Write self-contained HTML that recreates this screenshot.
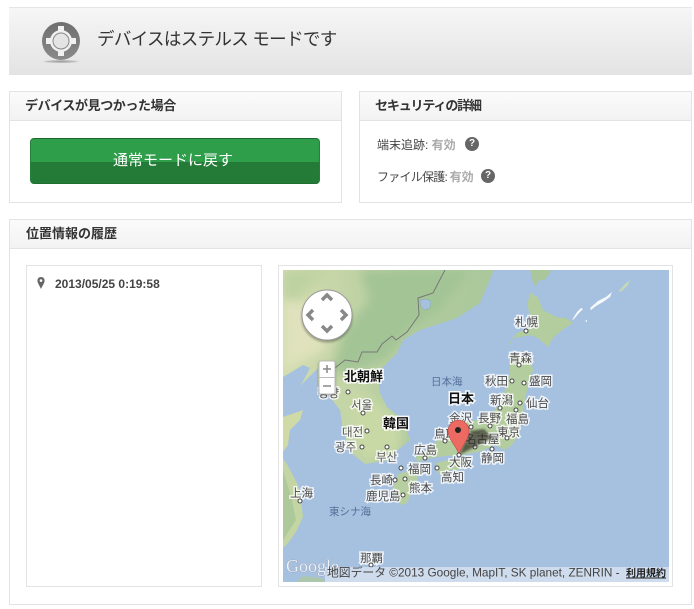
<!DOCTYPE html>
<html lang="ja"><head><meta charset="utf-8"><style>
*{box-sizing:border-box}
html,body{margin:0;padding:0;background:#fff;width:694px;height:609px;overflow:hidden}
body{position:relative;font-family:"Liberation Sans","Noto Sans CJK JP",sans-serif;color:#333}
.a{position:absolute}
.box{position:absolute;border:1px solid #e3e3e3;background:#fff}
.hd{position:absolute;left:0;right:0;top:0;height:29px;background:linear-gradient(#fbfbfb,#f2f2f2);border-bottom:1px solid #e3e3e3}
.t{position:absolute;white-space:nowrap;line-height:1}
.h{font-size:13px;font-weight:700;color:#333}
.q{position:absolute;width:14px;height:14px;border-radius:50%;background:#666;color:#fff;font:bold 10px/14px "Liberation Sans",sans-serif;text-align:center}
svg text{font-family:"Liberation Sans","Noto Sans CJK JP",sans-serif;paint-order:stroke;stroke:#fff;stroke-opacity:.8;stroke-width:3px;fill:#4a4a4a;font-size:11.5px}
svg text.b{font-weight:700;font-size:13px;fill:#111;stroke-width:3px;stroke-opacity:.9}
svg text.k{font-family:"Noto Sans CJK KR",sans-serif;fill:#555}
svg text.s{fill:#55709a;stroke:none}
svg circle.c{fill:#fff;stroke:#444;stroke-width:1}
</style></head><body>

<div class="a" style="left:9px;top:7px;width:683px;height:68px;background:linear-gradient(#f6f6f6,#e3e3e3);border-top:1px solid #e6e6e6"></div>
<svg class="a" style="left:36px;top:16px" width="50" height="50" viewBox="0 0 50 50">
<defs><radialGradient id="g" cx=".5" cy=".5" r=".5"><stop offset="0" stop-color="#999"/><stop offset=".7" stop-color="#aaa" stop-opacity=".7"/><stop offset="1" stop-color="#999" stop-opacity="0"/></radialGradient>
<linearGradient id="gr" x1="0" y1="0" x2="0" y2="1"><stop offset="0" stop-color="#6e6e6e"/><stop offset=".5" stop-color="#7c7c7c"/><stop offset="1" stop-color="#8a8a8a"/></linearGradient></defs>
<ellipse cx="25" cy="45.500" rx="19" ry="1.600" fill="url(#g)"/>
<circle cx="25" cy="25" r="19" fill="url(#gr)"/>
<circle cx="25" cy="25" r="11" fill="#f0f0f0"/>
<rect x="22" y="10" width="6" height="6" fill="#f0f0f0"/><rect x="22" y="34" width="6" height="6" fill="#f0f0f0"/><rect x="10" y="22" width="6" height="6" fill="#f0f0f0"/><rect x="34" y="22" width="6" height="6" fill="#f0f0f0"/>
<circle cx="25" cy="25" r="8" fill="#e4e4e4" stroke="#888" stroke-width="1"/>
</svg>
<div class="t" style="left:97px;top:31px;font-size:17.500px;letter-spacing:-.65px;color:#333">デバイスはステルス モードです</div>

<div class="box" style="left:9px;top:91px;width:333px;height:112px"><div class="hd"></div></div>
<div class="t h" style="left:25px;top:99px;letter-spacing:-.4px">デバイスが見つかった場合</div>
<div class="a" style="left:30px;top:138px;width:290px;height:46px;border-radius:4px;background:linear-gradient(#2f9e4a 0,#2f9e4a 52%,#247a37 52%,#247a37 100%);border:1px solid #1f6f33;border-color:#1c6a30 #25803a #1f6f33"></div>
<div class="t" style="left:113px;top:153px;font-size:15px;color:#fff">通常モードに戻す</div>

<div class="box" style="left:359px;top:91px;width:333px;height:112px"><div class="hd"></div></div>
<div class="t h" style="left:375px;top:99px;letter-spacing:-1.150px">セキュリティの詳細</div>
<div class="t" style="left:377px;top:139px;font-size:12px;color:#444">端末追跡: <span style="color:#aaa;font-weight:700">有効</span></div>
<div class="q" style="left:465px;top:137px">?</div>
<div class="t" style="left:377px;top:171px;font-size:12px;letter-spacing:-.75px;color:#444">ファイル保護: <span style="color:#aaa;font-weight:700;letter-spacing:0">有効</span></div>
<div class="q" style="left:481px;top:169px">?</div>

<div class="box" style="left:9px;top:219px;width:683px;height:386px"><div class="hd"></div></div>
<div class="t h" style="left:26px;top:227px">位置情報の履歴</div>

<div class="box" style="left:26px;top:265px;width:236px;height:322px"></div>
<svg class="a" style="left:36px;top:276px" width="10" height="14" viewBox="0 0 10 14"><path d="M5 1C2.800 1 1.400 2.600 1.400 4.600 1.400 7 3.800 10 5 13 6.200 10 8.600 7 8.600 4.600 8.600 2.600 7.200 1 5 1z" fill="#666"/><circle cx="5" cy="4.600" r="1.300" fill="#fff"/></svg>
<div class="t" style="left:55px;top:278px;font-size:12px;font-weight:700;color:#444">2013/05/25 0:19:58</div>

<div class="box" style="left:278px;top:265px;width:395px;height:322px"></div>
<svg class="a" style="left:283px;top:270px" width="386" height="312" viewBox="283 270 386 312">
<defs>
<linearGradient id="land" x1="0" y1="0" x2="1" y2="0"><stop offset="0" stop-color="#d3dcae"/><stop offset=".6" stop-color="#b2cc9e"/><stop offset="1" stop-color="#aac89c"/></linearGradient>
<filter id="bl"><feGaussianBlur stdDeviation="5"/></filter>
<filter id="sh"><feGaussianBlur stdDeviation="1.200"/></filter>
<clipPath id="cp"><path d="M283 270H494L480 303 457 318 420 330 403 340 397 353 377 373 380 393 387 407 403 420 410 440 395 452 390 460 365 464 350 452 343 430 340 410 327 393 318 385 318 368 303 383 300 387 310 368 303 365 290 373 283 377Z"/></clipPath>
</defs>
<rect x="283" y="270" width="386" height="312" fill="#a6c0df"/>
<path d="M283 270H494L480 303 457 318 420 330 403 340 397 353 377 373 380 393 387 407 403 420 410 440 395 452 390 460 365 464 350 452 343 430 340 410 327 393 318 385 318 368 303 383 300 387 310 368 303 365 290 373 283 377Z" fill="url(#land)"/>
<g clip-path="url(#cp)" filter="url(#bl)">
<path d="M360 270H470L440 310 410 330 385 360 360 370 330 375 345 330 370 300Z" fill="#a3c495"/>
<path d="M283 270H330L310 285 283 320Z" fill="#bdd2a0"/>
<path d="M283 300L330 305 325 350 283 370Z" fill="#dfe2bc"/>
<path d="M350 385L400 420 400 450 365 460 350 430Z" fill="#c9d9a6"/>
</g>
<path d="M445 270L433 293 418 298 419 315 407 332 396 340 392 336 382 344 377 352 362 352 358 362 345 360 335 368" fill="none" stroke="#777" stroke-width="1"/>
<path d="M420 300l6-1 5 2 -1 7-5 2-4-3z" fill="#a6c0df" stroke="#8aa" stroke-width=".5"/>
<!-- china -->
<path d="M283 417L303 410 300 420 290 430 288 445 283 452Z" fill="#cfdaa6"/>
<path d="M283 458L288 466 298 485 301 500 303 517 296 532 288 543 283 548Z" fill="#c3d5a2"/>
<path d="M283 470L292 500 296 520 283 540Z" fill="#adc99a"/>
<path d="M296 582L303 576 322 578 326 582Z" fill="#b0c998" opacity=".7"/>
<!-- Sakhalin, Hokkaido -->
<path d="M530 270H551L546 279 538 281 536 287 533 282Z" fill="#a9c79a"/>
<path d="M530 293L538 297 543 310 556 317 566 318 573 323 562 330 553 338 548 347 538 338 530 335 520 337 513 338 510 345 508 350 511 340 518 332 528 330 531 318 527 305Z" fill="#b3cd9f"/>
<!-- Honshu -->
<path d="M510 353L522 357 530 357 533 370 528 385 525 400 522 418 519 435 512 445 505 450 495 445 488 448 478 452 462 455 445 456 430 458 417 462 416 456 430 448 440 438 456 432 467 421 480 420 492 413 500 403 506 388 510 372Z" fill="#b3cd9f"/>
<!-- Shikoku -->
<path d="M436 463L452 459 465 459 470 463 458 470 450 470 445 477 437 472Z" fill="#b6cea0"/>
<!-- Kyushu -->
<path d="M398 474L412 470 420 470 416 482 412 492 407 503 400 505 396 498 393 488Z" fill="#b6cea0"/>
<!-- Kurils -->
<path d="M572 320l5-8 4-4 2 1-4 4-5 6zM590 308l8-7 8-4 6-5-2 5-7 5-7 4-5 4z" fill="#f6f9fb"/>
<path d="M585 321l2-1 0 2z" fill="#fff"/>
<path d="M618 292l6-7 6-5-2 5-6 6z" fill="#c3d8b5"/>
<!-- labels -->
<text class="b" x="344" y="381">北朝鮮</text>
<text class="b" x="448" y="403">日本</text>
<text class="b" x="383" y="428" style="font-size:13px">韓国</text>
<text class="s" x="431" y="385" style="font-size:10.500px">日本海</text>
<text class="s" x="329" y="515" style="font-size:10.500px">東シナ海</text>
<text class="k" x="318" y="397">평양</text><circle class="c" cx="348" cy="392" r="2"/>
<text class="k" x="351" y="409">서울</text><circle class="c" cx="363" cy="413" r="2"/>
<text class="k" x="342" y="436">대전</text><circle class="c" cx="367" cy="431" r="2"/>
<text class="k" x="335" y="451">광주</text><circle class="c" cx="362" cy="447" r="2"/>
<text class="k" x="376" y="461">부산</text><circle class="c" cx="387" cy="447" r="2"/>
<text x="515" y="326">札幌</text><circle class="c" cx="526" cy="331" r="2"/>
<text x="509" y="362">青森</text><circle class="c" cx="519" cy="365" r="2"/>
<text x="485" y="385">秋田</text><circle class="c" cx="512" cy="381" r="2"/>
<text x="529" y="385">盛岡</text><circle class="c" cx="524" cy="383" r="2"/>
<text x="490" y="404">新潟</text><circle class="c" cx="500" cy="408" r="2"/>
<text x="526" y="407">仙台</text><circle class="c" cx="520" cy="403" r="2"/>
<text x="478" y="422">長野</text><circle class="c" cx="490" cy="426" r="2"/>
<text x="506" y="423">福島</text><circle class="c" cx="516" cy="410" r="2"/>
<text x="497" y="436">東京</text><circle class="c" cx="507" cy="438" r="2"/>
<text x="449" y="422">金沢</text><circle class="c" cx="471" cy="427" r="2"/>
<text x="434" y="438">鳥取</text><circle class="c" cx="445" cy="441" r="2"/>
<text x="465" y="443">名古屋</text><circle class="c" cx="475" cy="447" r="2"/>
<text x="481" y="462">静岡</text><circle class="c" cx="492" cy="449" r="2"/>
<text x="414" y="454">広島</text><circle class="c" cx="425" cy="458" r="2"/>
<text x="449" y="466">大阪</text>
<text x="441" y="481">高知</text><circle class="c" cx="437" cy="468" r="2"/>
<text x="408" y="473">福岡</text><circle class="c" cx="401" cy="468" r="2"/>
<text x="370" y="484">長崎</text><circle class="c" cx="395" cy="480" r="2"/>
<text x="409" y="492">熊本</text><circle class="c" cx="405" cy="479" r="2"/>
<text x="366" y="500">鹿児島</text><circle class="c" cx="403" cy="495" r="2"/>
<text x="290" y="497">上海</text><circle class="c" cx="300" cy="501" r="2"/>
<text x="360" y="562">那覇</text><circle class="c" cx="371" cy="565" r="2"/>
<!-- marker -->
<path d="M459 455L492 438 484 429 470 431Z" fill="#2a2a1e" opacity=".7" filter="url(#sh)"/>
<path d="M459 455C457 446 448 440 448 431 448 425 453 420 458.500 420 464 420 469 425 469 431 469 440 461 446 459 455Z" fill="#ec6a62" stroke="#b84a44" stroke-width=".6"/>
<circle cx="458" cy="430" r="3" fill="#222"/>
<circle class="c" cx="459" cy="455" r="2"/>
<!-- pan control -->
<circle cx="327" cy="315" r="25" fill="#fff" stroke="#999" stroke-width="1" style="filter:drop-shadow(0 2px 1px rgba(0,0,0,.3))"/>
<g fill="none" stroke="#888" stroke-width="3.500">
<path d="M322 300l5-5 5 5M322 326l5 5 5-5M313 310l-5 5 5 5M341 310l5 5-5 5"/></g>
<!-- zoom -->
<rect x="319" y="361" width="16" height="33" rx="2" fill="#fff" stroke="#bbb" style="filter:drop-shadow(0 1px 1px rgba(0,0,0,.3))"/>
<path d="M319 377.500h16" stroke="#bbb"/>
<path d="M323 369h8M327 365v8M323 386h8" stroke="#888" stroke-width="1.500"/>
<!-- attribution -->
<rect x="325" y="567" width="344" height="15" fill="#fff" opacity=".45"/>
<text x="286" y="572" style="font-family:'Liberation Serif',serif;font-size:18px;fill:#eef1f5;stroke:#667;stroke-width:.6px;stroke-opacity:.5">Google</text>
<text x="327" y="576.500" style="font-size:11.800px;fill:#444;stroke:none">地図データ ©2013 Google, MapIT, SK planet, ZENRIN -</text>
<text x="626" y="576.500" style="font-size:10px;fill:#222;stroke:none;font-weight:700;text-decoration:underline">利用規約</text>
</svg>
</body></html>
